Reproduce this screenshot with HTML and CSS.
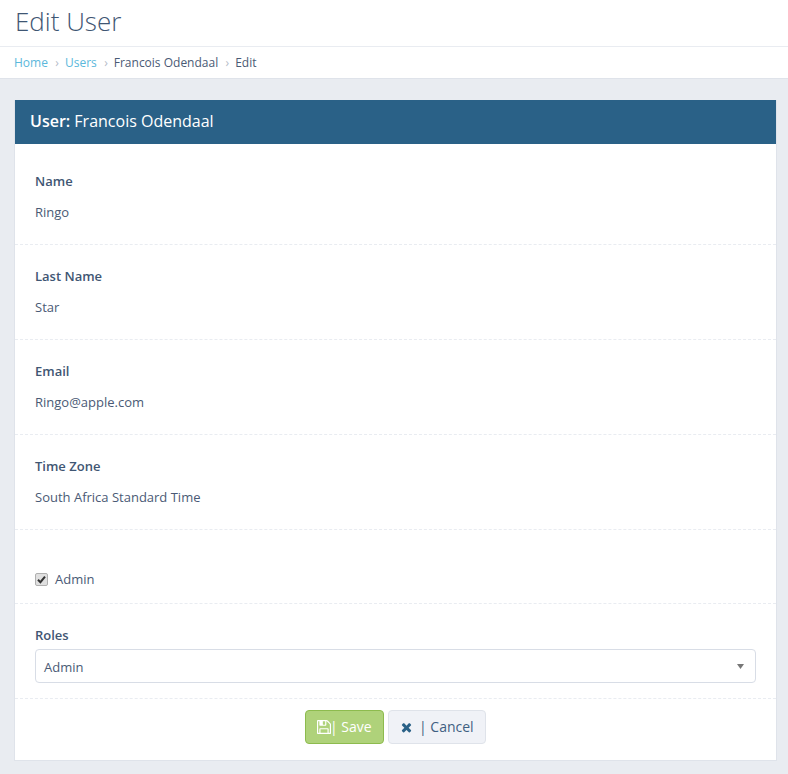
FILE: index.html
```html
<!DOCTYPE html>
<html lang="en">
<head>
    <meta charset="UTF-8">
    <title>Edit User</title>
    <link rel="stylesheet" href="styles.css">
</head>
<body>
<div class="page-title">
    <h1>Edit User</h1>
</div>
<ul class="crumbs">
    <li><a href="#">Home</a></li>
    <li><a href="#">Users</a></li>
    <li>Francois Odendaal</li>
    <li>Edit</li>
</ul>
<div class="content">
    <div class="panel">
        <div class="panel-head"><b>User:</b> Francois Odendaal</div>
        <div class="panel-body">
            <div class="row">
                <label>Name</label>
                <p>Ringo</p>
            </div>
            <div class="row">
                <label>Last Name</label>
                <p>Star</p>
            </div>
            <div class="row">
                <label>Email</label>
                <p>Ringo@apple.com</p>
            </div>
            <div class="row">
                <label>Time Zone</label>
                <p>South Africa Standard Time</p>
            </div>
            <div class="row row-check">
                <span class="check">
                    <svg width="9" height="9" viewBox="0 0 9 9"><path d="M1 4.8 L3.4 7.2 L8 1.6" fill="none" stroke="#333" stroke-width="2"/></svg>
                </span>
                <span>Admin</span>
            </div>
            <div class="row row-select">
                <label>Roles</label>
                <div class="select">
                    <span class="select-text">Admin</span>
                    <svg class="arrow" width="7" height="5" viewBox="0 0 7 5"><path d="M0 0 H7 L3.5 5 Z" fill="#777"/></svg>
                </div>
            </div>
            <div class="actions">
                <button class="btn btn-save">
                    <svg class="icon" width="14" height="14" viewBox="0 0 1536 1536"><path d="M384 1408h768v-384h-768v384zm896 0h128v-896q0-14-10-38.5t-20-34.5l-281-281q-10-10-34-20t-39-10v416q0 40-28 68t-68 28h-576q-40 0-68-28t-28-68v-416h-128v1280h128v-416q0-40 28-68t68-28h832q40 0 68 28t28 68v416zm-384-928v-320q0-13-9.5-22.5t-22.5-9.5h-192q-13 0-22.5 9.5t-9.5 22.5v320q0 13 9.5 22.5t22.5 9.5h192q13 0 22.5-9.5t9.5-22.5zm640 32v928q0 40-28 68t-68 28h-1344q-40 0-68-28t-28-68v-1344q0-40 28-68t68-28h928q40 0 88 20t76 48l280 280q28 28 48 76t20 88z" fill="#fff"/></svg>
                    <span>| Save</span>
                </button>
                <button class="btn btn-cancel">
                    <svg class="icon" width="11" height="11" viewBox="0 0 1408 1408"><path d="M1298 1102q0 40-28 68l-136 136q-28 28-68 28t-68-28l-294-294-294 294q-28 28-68 28t-68-28l-136-136q-28-28-28-68t28-68l294-294-294-294q-28-28-28-68t28-68l136-136q28-28 68-28t68 28l294 294 294-294q28-28 68-28t68 28l136 136q28 28 28 68t-28 68l-294 294 294 294q28 28 28 68z" fill="#2a6187"/></svg>
                    <span>| Cancel</span>
                </button>
            </div>
        </div>
    </div>
</div>
</body>
</html>
```

FILE: styles.css
```css
* {
    margin: 0;
    padding: 0;
    box-sizing: border-box;
    list-style: none;
}

html, body {
    height: 100%;
}

body {
    background: #e9ecf1;
    font-family: "Open Sans", "Liberation Sans", sans-serif;
    font-size: 13px;
    color: #4a5a75;
}

.page-title {
    height: 47px;
    padding-left: 15px;
    background: #fff;
    border-bottom: 1px solid #e9ecf1;
}

.page-title h1 {
    font-size: 26px;
    font-weight: 300;
    line-height: 42px;
    color: #3f5673;
}

.crumbs {
    display: flex;
    height: 32px;
    padding-left: 14px;
    background: #fff;
    border-bottom: 1px solid #dfe3ea;
    font-size: 12px;
    line-height: 31px;
}

.crumbs li + li::before {
    content: "\203A";
    margin: 0 6px 0 7.4px;
    color: #b5bcc8;
}

.crumbs a {
    color: #5bb8dc;
    text-decoration: none;
}

.content {
    padding: 21px 11px 0 14px;
}

.panel {
    border: 1px solid #dfe3ea;
    border-top: 0;
    background: #fff;
}

.panel-head {
    height: 44px;
    padding-left: 15px;
    background: #2a6187;
    color: #fff;
    font-size: 16px;
    line-height: 43px;
}

.panel-head b {
    font-weight: 600;
}

.panel-body {
    height: 616px;
}

.row {
    height: 95px;
    padding: 22px 20px 0;
    border-bottom: 1px dashed #e9ecf1;
}

.row:first-child {
    height: 101px;
    padding-top: 28px;
}

.row label {
    display: block;
    font-weight: 600;
    line-height: 18px;
    color: #3f5673;
}

.row p {
    margin-top: 13px;
    line-height: 18px;
}

.row-check {
    display: flex;
    align-items: center;
    gap: 7px;
    height: 74px;
    padding-top: 25px;
}

.check {
    display: flex;
    align-items: center;
    justify-content: center;
    width: 13px;
    height: 13px;
    background: #e0e0e0;
    border: 1px solid #b0b0b0;
    border-radius: 2px;
}

.row-select {
    padding-top: 22px;
}

.row-select label {
    margin-bottom: 5px;
}

.select {
    display: flex;
    align-items: center;
    justify-content: space-between;
    height: 34px;
    padding: 0 11px 0 8px;
    border: 1px solid #d8dde6;
    border-radius: 4px;
}

.select-text {
    padding-top: 1px;
}

.actions {
    display: flex;
    justify-content: center;
    gap: 4px;
    padding-top: 11px;
}

.btn {
    display: flex;
    align-items: center;
    height: 34px;
    padding-bottom: 2px;
    border-radius: 4px;
    font-family: inherit;
    font-size: 14px;
    cursor: pointer;
}

.btn .icon {
    margin-top: 2px;
}

.btn-save {
    gap: 0;
    width: 79px;
    padding-left: 11px;
    background: #afd27a;
    border: 1px solid #8dbb4e;
    color: #fff;
}

.btn-save .icon {
    margin-right: -1px;
}

.btn-cancel {
    gap: 7px;
    width: 98px;
    padding-left: 12px;
    background: #f0f2f7;
    border: 1px solid #dfe3ea;
    color: #3f5f82;
}
```
